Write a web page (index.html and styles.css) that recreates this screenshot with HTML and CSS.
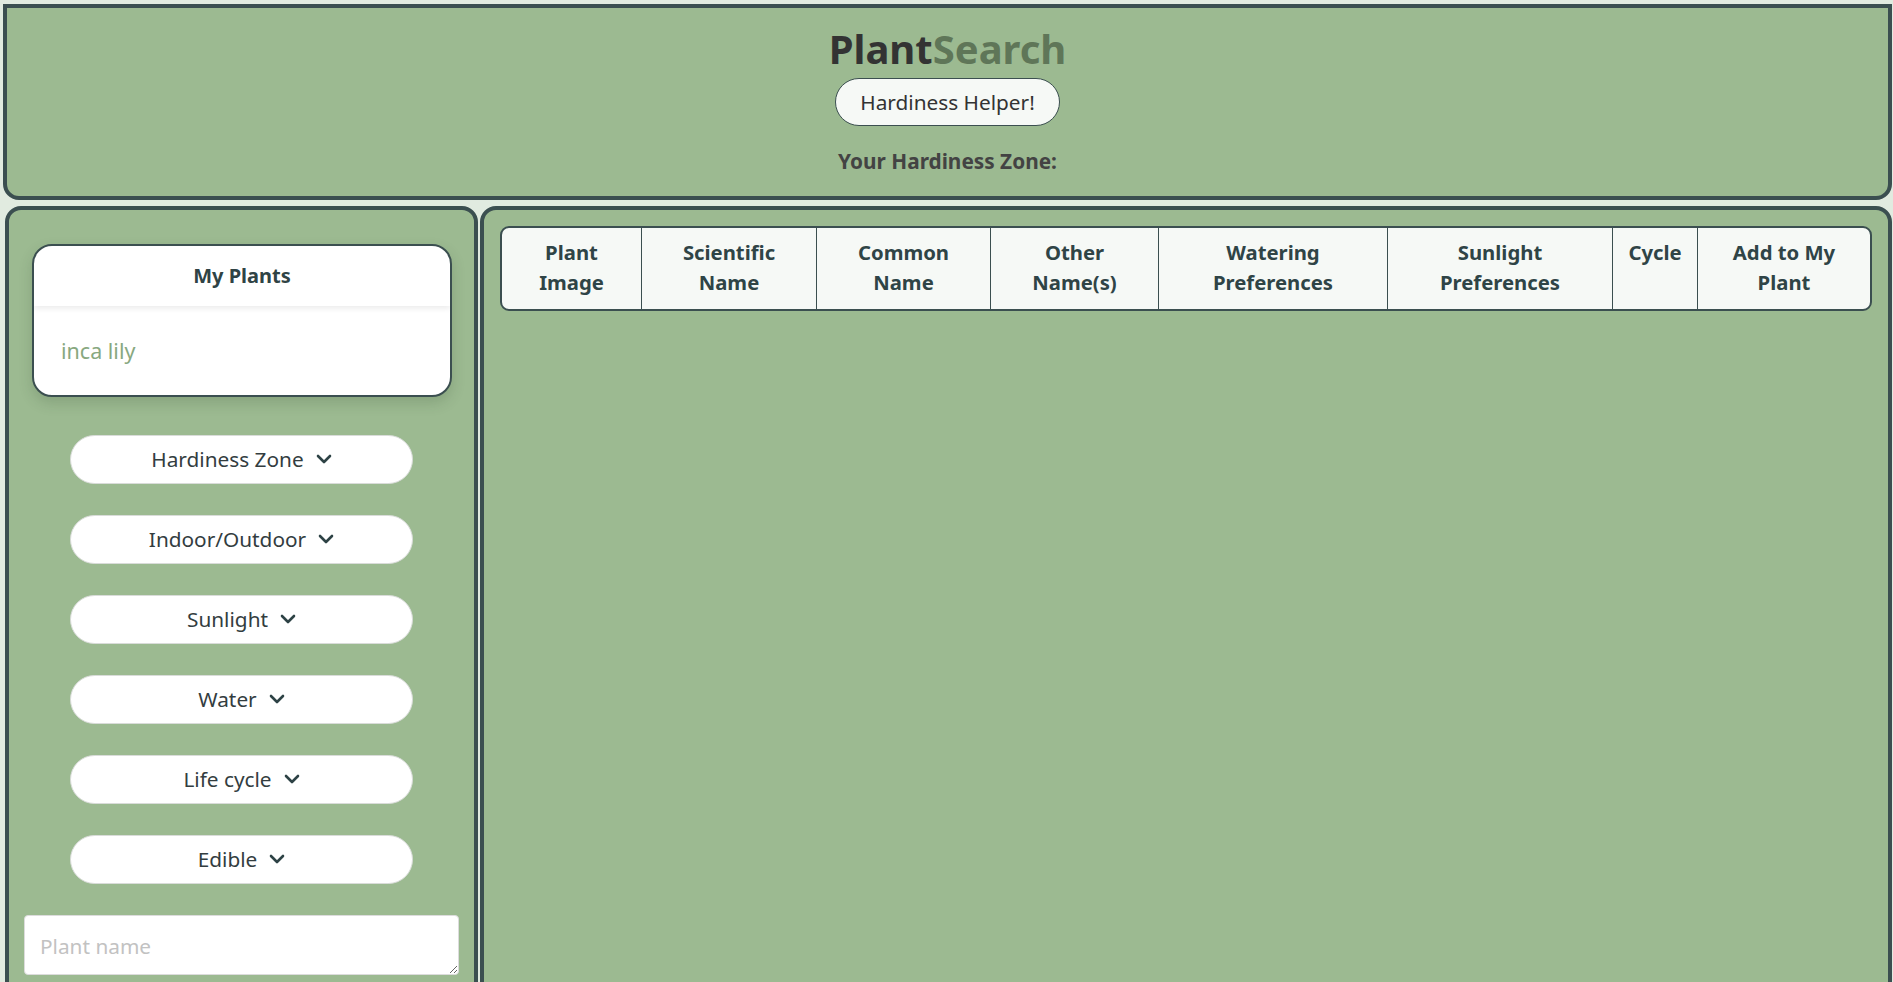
FILE: index.html
```html
<!DOCTYPE html>
<html lang="en">
<head>
<meta charset="utf-8">
<title>PlantSearch</title>
<link rel="stylesheet" href="styles.css">
</head>
<body>
<div class="page">
  <header class="site-header">
    <h1 class="title"><span class="title-plant">Plant</span><span class="title-search">Search</span></h1>
    <button class="helper-btn" type="button">Hardiness Helper!</button>
    <h3 class="zone">Your Hardiness Zone:</h3>
  </header>

  <div class="content">
    <aside class="sidebar">
      <section class="my-plants">
        <div class="my-plants-head">My Plants</div>
        <div class="my-plants-body">inca lily</div>
      </section>

      <div class="filters">
        <button class="filter" type="button">Hardiness Zone<svg class="chev" viewBox="0 0 16 10" width="16" height="10"><polyline points="2,2 8,8 14,2"/></svg></button>
        <button class="filter" type="button">Indoor/Outdoor<svg class="chev" viewBox="0 0 16 10" width="16" height="10"><polyline points="2,2 8,8 14,2"/></svg></button>
        <button class="filter" type="button">Sunlight<svg class="chev" viewBox="0 0 16 10" width="16" height="10"><polyline points="2,2 8,8 14,2"/></svg></button>
        <button class="filter" type="button">Water<svg class="chev" viewBox="0 0 16 10" width="16" height="10"><polyline points="2,2 8,8 14,2"/></svg></button>
        <button class="filter" type="button">Life cycle<svg class="chev" viewBox="0 0 16 10" width="16" height="10"><polyline points="2,2 8,8 14,2"/></svg></button>
        <button class="filter" type="button">Edible<svg class="chev" viewBox="0 0 16 10" width="16" height="10"><polyline points="2,2 8,8 14,2"/></svg></button>
      </div>

      <textarea class="plant-name" placeholder="Plant name"></textarea>
    </aside>

    <main class="results">
      <table class="plant-table">
        <colgroup>
          <col class="c-img"><col class="c-sci"><col class="c-com"><col class="c-oth">
          <col class="c-wat"><col class="c-sun"><col class="c-cyc"><col class="c-add">
        </colgroup>
        <thead>
          <tr>
            <th>Plant<br>Image</th>
            <th>Scientific<br>Name</th>
            <th>Common<br>Name</th>
            <th>Other<br>Name(s)</th>
            <th>Watering<br>Preferences</th>
            <th>Sunlight<br>Preferences</th>
            <th>Cycle</th>
            <th>Add to My<br>Plant</th>
          </tr>
        </thead>
      </table>
    </main>
  </div>
</div>
</body>
</html>
```

FILE: styles.css
```css
* { box-sizing: border-box; }

html, body {
  margin: 0;
  padding: 0;
}

body {
  background: #e1ebe0;
  font-family: "Noto Sans", "Open Sans", sans-serif;
  color: #333333;
}

.page {
  padding: 4px 1px 0 3px;
}

.site-header {
  background: #9cba91;
  border: 4px solid #3b4f50;
  border-radius: 0 0 16px 16px;
  height: 196px;
  display: flex;
  flex-direction: column;
  align-items: center;
  padding-top: 14px;
}

.title {
  margin: 0;
  font-size: 40px;
  font-weight: 700;
  line-height: 54px;
}

.title-plant { color: #333333; }
.title-search { color: #5f7658; }

.helper-btn {
  margin-top: 2px;
  height: 48px;
  padding: 0 24px;
  border: 1px solid #3b4f50;
  border-radius: 24px;
  background: #f6f9f6;
  font-family: inherit;
  font-size: 20.8px;
  color: #333333;
}

.zone {
  margin: 21px 0 0;
  font-size: 20.8px;
  font-weight: 700;
  line-height: 28px;
  color: #434343;
}

.content {
  display: flex;
  gap: 2px;
  margin-top: 6px;
  padding-left: 2px;
  padding-right: 2px;
}

.sidebar {
  width: 473px;
  flex: none;
  background: #9cba91;
  border: 4px solid #3b4f50;
  border-radius: 16px;
  padding: 34px 0 80px;
  display: flex;
  flex-direction: column;
  align-items: center;
}

.my-plants {
  width: 420px;
  margin-left: 1px;
  background: #ffffff;
  border: 2px solid #3b4f50;
  border-radius: 20px;
  overflow: hidden;
  box-shadow: 0 6px 14px rgba(40, 60, 40, 0.18);
}

.my-plants-head {
  text-align: center;
  font-weight: 700;
  font-size: 20px;
  line-height: 27px;
  padding: 16px 0 17px;
  color: #2f4345;
  box-shadow: 0 3px 5px rgba(0, 0, 0, 0.07);
  position: relative;
}

.my-plants-body {
  padding: 31px 27px 30px;
  font-size: 21.5px;
  line-height: 28px;
  color: #88a880;
}

.filters {
  margin-top: 38px;
  display: flex;
  flex-direction: column;
  gap: 31px;
}

.filter {
  width: 343px;
  height: 49px;
  background: #ffffff;
  border: 1px solid #d9dcd9;
  border-radius: 25px;
  font-family: inherit;
  font-size: 20.8px;
  color: #333d3f;
  display: flex;
  align-items: center;
  justify-content: center;
  gap: 12px;
  padding: 0 0 2px;
}

.chev {
  fill: none;
  stroke: #2d4245;
  stroke-width: 2.6;
  stroke-linecap: round;
  stroke-linejoin: round;
}

.plant-name {
  margin-top: 31px;
  width: 435px;
  height: 60px;
  border: 1px solid #dcdcdc;
  border-radius: 4px;
  background: #ffffff;
  font-family: inherit;
  font-size: 20.8px;
  padding: 16px 15px 10px;
  color: #333333;
  resize: vertical;
}

.plant-name::placeholder {
  color: #c2c2c2;
}

.results {
  flex: 1;
  background: #9cba91;
  border: 4px solid #3b4f50;
  border-radius: 16px;
  padding: 16px;
}

.plant-table {
  width: 100%;
  table-layout: fixed;
  border-collapse: separate;
  border-spacing: 0;
  border: 2px solid #3b4f50;
  border-radius: 9px;
  background: #f6f9f6;
  overflow: hidden;
}

.plant-table th {
  vertical-align: top;
  text-align: center;
  font-size: 20.3px;
  font-weight: 700;
  line-height: 30px;
  padding: 9px 4px 12px;
  color: #2f4446;
  border-left: 1px solid #3b4f50;
}

.plant-table th:first-child {
  border-left: none;
}

.c-img { width: 139px; }
.c-sci { width: 175px; }
.c-com { width: 174px; }
.c-oth { width: 168px; }
.c-wat { width: 229px; }
.c-sun { width: 225px; }
.c-cyc { width: 85px; }
.c-add { width: 173px; }
```
